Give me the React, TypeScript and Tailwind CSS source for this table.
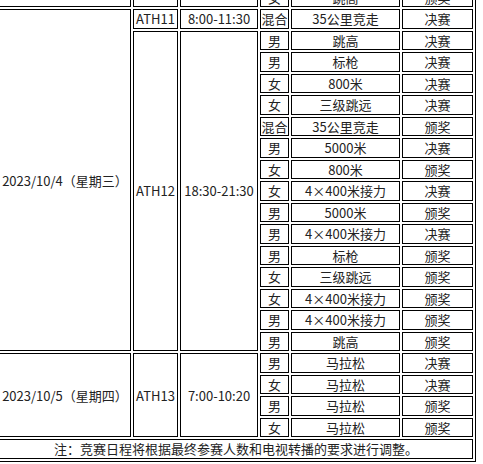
type Row = { gender: string; event: string; stage: string };

const prevRow: Row = { gender: '女', event: '跳高', stage: '颁奖' };

const ath11: Row[] = [{ gender: '混合', event: '35公里竞走', stage: '决赛' }];

const ath12: Row[] = [
  { gender: '男', event: '跳高', stage: '决赛' },
  { gender: '男', event: '标枪', stage: '决赛' },
  { gender: '女', event: '800米', stage: '决赛' },
  { gender: '女', event: '三级跳远', stage: '决赛' },
  { gender: '混合', event: '35公里竞走', stage: '颁奖' },
  { gender: '男', event: '5000米', stage: '决赛' },
  { gender: '女', event: '800米', stage: '颁奖' },
  { gender: '女', event: '4×400米接力', stage: '决赛' },
  { gender: '男', event: '5000米', stage: '颁奖' },
  { gender: '男', event: '4×400米接力', stage: '决赛' },
  { gender: '男', event: '标枪', stage: '颁奖' },
  { gender: '女', event: '三级跳远', stage: '颁奖' },
  { gender: '女', event: '4×400米接力', stage: '颁奖' },
  { gender: '男', event: '4×400米接力', stage: '颁奖' },
  { gender: '男', event: '跳高', stage: '颁奖' },
];

const ath13: Row[] = [
  { gender: '男', event: '马拉松', stage: '决赛' },
  { gender: '女', event: '马拉松', stage: '决赛' },
  { gender: '男', event: '马拉松', stage: '颁奖' },
  { gender: '女', event: '马拉松', stage: '颁奖' },
];

// border-box cell height; with 2px spacing this gives the 21.5px row pitch
const td = 'h-[19.5px] border border-black p-0 text-center align-middle whitespace-nowrap';

function EventCells({ r }: { r: Row }) {
  return (
    <>
      <td className={td}>{r.gender}</td>
      <td className={td}>{r.event}</td>
      <td className={td}>{r.stage}</td>
    </>
  );
}

export default function App() {
  return (
    <div className="h-[464px] w-[483px] overflow-hidden bg-white">
      {/* page is scrolled: the table starts a little above and left of the view */}
      <table
        className="-ml-[4px] -mt-[15.5px] border-separate border-spacing-[2px] border border-black text-[13px] leading-none text-[#222]"
        style={{ fontFamily: '"Noto Sans CJK SC", "Noto Sans", sans-serif' }}
      >
        <colgroup>
          <col className="w-[132px]" />
          <col className="w-[45px]" />
          <col className="w-[78px]" />
          <col className="w-[29px]" />
          <col className="w-[109px]" />
          <col className="w-[71px]" />
        </colgroup>
        <tbody>
          <tr>
            <td className={td}></td>
            <td className={td}></td>
            <td className={td}></td>
            <EventCells r={prevRow} />
          </tr>

          <tr>
            <td className={td} rowSpan={1 + ath12.length}>
              2023/10/4（星期三）
            </td>
            <td className={td}>ATH11</td>
            <td className={td}>8:00-11:30</td>
            <EventCells r={ath11[0]} />
          </tr>
          {ath12.map((r, i) => (
            <tr key={'a12' + i}>
              {i === 0 && (
                <>
                  <td className={td} rowSpan={ath12.length}>
                    ATH12
                  </td>
                  <td className={td} rowSpan={ath12.length}>
                    18:30-21:30
                  </td>
                </>
              )}
              <EventCells r={r} />
            </tr>
          ))}

          {ath13.map((r, i) => (
            <tr key={'a13' + i}>
              {i === 0 && (
                <>
                  <td className={td} rowSpan={ath13.length}>
                    2023/10/5（星期四）
                  </td>
                  <td className={td} rowSpan={ath13.length}>
                    ATH13
                  </td>
                  <td className={td} rowSpan={ath13.length}>
                    7:00-10:20
                  </td>
                </>
              )}
              <EventCells r={r} />
            </tr>
          ))}

          <tr>
            <td className={td} colSpan={6}>
              注：竞赛日程将根据最终参赛人数和电视转播的要求进行调整。
            </td>
          </tr>
        </tbody>
      </table>
    </div>
  );
}
